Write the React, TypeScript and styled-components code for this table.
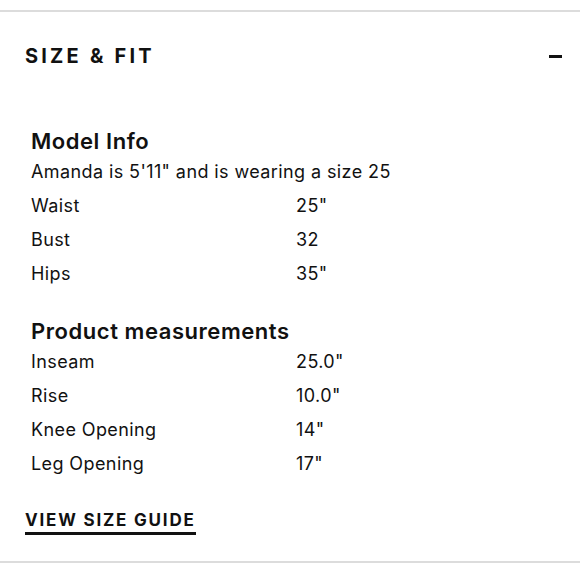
import styled, { createGlobalStyle } from "styled-components";

const GlobalStyle = createGlobalStyle`
	body {
		margin: 0;
		background: #fff;
		font-family: "Inter", "Noto Sans", sans-serif;
		color: #111;
	}
`;

const Panel = styled.section`
	margin-top: 10px;
	border-top: 2px solid #dcdcdc;
	border-bottom: 2px solid #dcdcdc;
	padding-bottom: 26px;
`;

const Header = styled.div`
	display: flex;
	align-items: center;
	justify-content: space-between;
	height: 88px;
	margin-bottom: 23px;
	padding: 0 18px 0 25px;
`;

const Title = styled.h2`
	margin: 0;
	font-size: 20px;
	font-weight: 700;
	letter-spacing: 3.2px;
	text-transform: uppercase;
`;

const Toggle = styled.span`
	display: block;
	width: 13px;
	height: 3px;
	background: #111;
`;

const Body = styled.div`
	padding: 0 25px 0 31px;
`;

const Group = styled.div`
	& + & {
		margin-top: 22px;
	}
`;

const GroupTitle = styled.h3`
	margin: 0;
	height: 32px;
	line-height: 36px;
	font-size: 22px;
	font-weight: 600;
	letter-spacing: 0.55px;
`;

const Line = styled.p`
	margin: 0;
	height: 34px;
	line-height: 34px;
	font-size: 18px;
	letter-spacing: 0.4px;
`;

const Row = styled.div`
	display: grid;
	grid-template-columns: 265px 1fr;
	height: 34px;
	line-height: 34px;
	font-size: 18px;
	letter-spacing: 0.4px;
`;

const GuideLink = styled.a`
	display: inline-block;
	margin: 29px 0 0 25px;
	padding-bottom: 2px;
	border-bottom: 3px solid #111;
	font-size: 17px;
	font-weight: 700;
	letter-spacing: 1.8px;
	color: #111;
	text-decoration: none;
	text-transform: uppercase;
`;

const model = [
	["Waist", '25"'],
	["Bust", "32"],
	["Hips", '35"'],
];

const product = [
	["Inseam", '25.0"'],
	["Rise", '10.0"'],
	["Knee Opening", '14"'],
	["Leg Opening", '17"'],
];

export default function App() {
	return (
		<>
			<GlobalStyle />
			<Panel>
				<Header>
					<Title>Size &amp; Fit</Title>
					<Toggle aria-label='Collapse' />
				</Header>
				<Body>
					<Group>
						<GroupTitle>Model Info</GroupTitle>
						<Line>Amanda is 5'11" and is wearing a size 25</Line>
						{model.map(([k, v]) => (
							<Row key={k}>
								<span>{k}</span>
								<span>{v}</span>
							</Row>
						))}
					</Group>
					<Group>
						<GroupTitle>Product measurements</GroupTitle>
						{product.map(([k, v]) => (
							<Row key={k}>
								<span>{k}</span>
								<span>{v}</span>
							</Row>
						))}
					</Group>
				</Body>
				<GuideLink href='#'>View Size Guide</GuideLink>
			</Panel>
		</>
	);
}
